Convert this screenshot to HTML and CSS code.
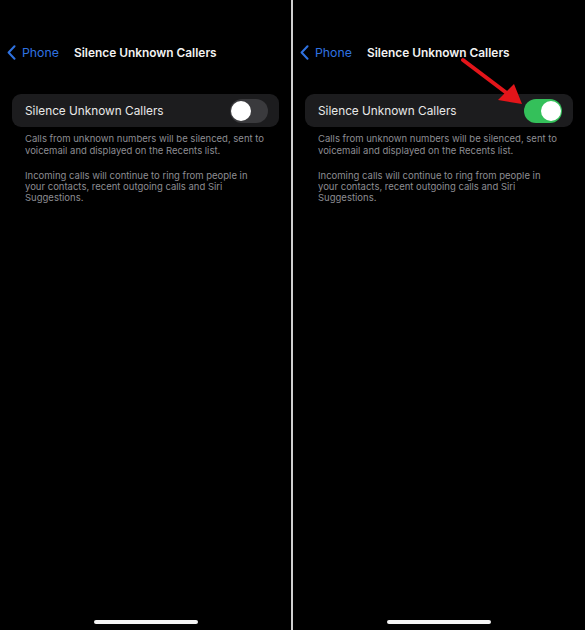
FILE: index.html
```html
<!DOCTYPE html>
<html>
<head>
<meta charset="utf-8">
<link rel="stylesheet" href="styles.css">
</head>
<body>
<div class="screen">
  <div class="panel">
    <div class="nav">
      <svg class="chev" width="9" height="15" viewBox="0 0 9 15"><path d="M7.5 1.2 L1.6 7.5 L7.5 13.8" fill="none" stroke="#2f72e0" stroke-width="2" stroke-linecap="round" stroke-linejoin="round"/></svg>
      <span class="back">Phone</span>
      <span class="title">Silence Unknown Callers</span>
    </div>
    <div class="card">
      <span class="label">Silence Unknown Callers</span>
      <div class="toggle"><div class="knob"></div></div>
    </div>
    <p class="note">Calls from unknown numbers will be silenced, sent to voicemail and displayed on the Recents list.</p>
    <p class="note second">Incoming calls will continue to ring from people in your contacts, recent outgoing calls and Siri Suggestions.</p>
    <div class="home"></div>
  </div>
  <div class="divider"></div>
  <div class="panel right">
    <div class="nav">
      <svg class="chev" width="9" height="15" viewBox="0 0 9 15"><path d="M7.5 1.2 L1.6 7.5 L7.5 13.8" fill="none" stroke="#2f72e0" stroke-width="2" stroke-linecap="round" stroke-linejoin="round"/></svg>
      <span class="back">Phone</span>
      <span class="title">Silence Unknown Callers</span>
    </div>
    <div class="card">
      <span class="label">Silence Unknown Callers</span>
      <div class="toggle on"><div class="knob"></div></div>
    </div>
    <p class="note">Calls from unknown numbers will be silenced, sent to voicemail and displayed on the Recents list.</p>
    <p class="note second">Incoming calls will continue to ring from people in your contacts, recent outgoing calls and Siri Suggestions.</p>
    <div class="home"></div>
    <svg class="arrow" width="80" height="60" viewBox="0 0 80 60">
      <line x1="5" y1="4" x2="50" y2="38" stroke="#e3151a" stroke-width="4" stroke-linecap="round"/>
      <polygon points="64,48 40,44 56,28" fill="#e3151a"/>
    </svg>
  </div>
</div>
</body>
</html>
```
FILE: styles.css
```css
* { box-sizing: border-box; }
html, body { margin: 0; padding: 0; background: #000; }
body { font-family: Inter, "Noto Sans", sans-serif; color: #fff; }
.screen { display: flex; width: 585px; height: 630px; background: #000; }
.panel { position: relative; width: 291px; height: 630px; display: flex; flex-direction: column; padding: 0 12px; }
.panel.right { width: 292px; }
.divider { width: 2px; height: 630px; background: #cfcfcf; }
.nav { display: flex; align-items: center; height: 24px; margin-top: 40px; margin-left: -5px; }
.chev { display: block; margin-right: 6px; }
.back { color: #2f72e0; font-size: 12.3px; margin-right: 15px; }
.title { font-size: 11.9px; font-weight: 600; color: #f2f2f2; }
.card { margin-top: 30px; height: 33px; background: #1c1c1e; border-radius: 9px; display: flex; align-items: center; justify-content: space-between; padding: 0 11px 0 13px; }
.label { font-size: 11.8px; color: #e8e8e8; }
.toggle { width: 38px; height: 24px; border-radius: 12px; background: #3a3a3d; position: relative; }
.knob { position: absolute; top: 2px; left: 1px; width: 20px; height: 20px; border-radius: 50%; background: #fff; }
.toggle.on { background: #34c05a; }
.toggle.on .knob { left: auto; right: 1px; }
.note { margin: 6px 0 0 0; padding: 0 13px; font-size: 9.5px; line-height: 11.8px; color: #8d8d92; }
.note.second { margin-top: 13px; line-height: 11.4px; }
.home { margin-top: auto; margin-bottom: 6px; align-self: center; width: 104px; height: 4px; border-radius: 2px; background: #f4f4f4; }
.arrow { position: absolute; left: 165px; top: 56px; }
```
